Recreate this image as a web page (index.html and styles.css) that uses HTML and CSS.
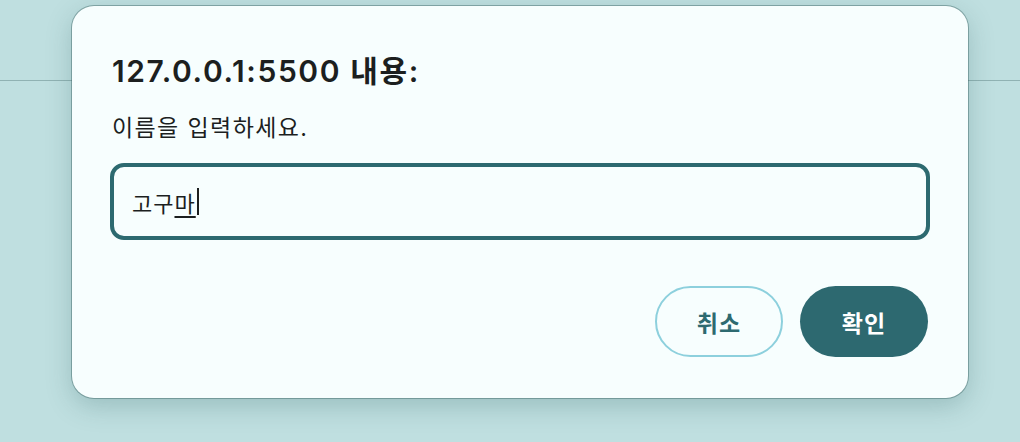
FILE: index.html
```html
<!DOCTYPE html>
<html lang="ko">

<head>
    <meta charset="UTF-8">
    <meta name="viewport" content="width=device-width, initial-scale=1.0">
    <title>Prompt</title>
    <link rel="stylesheet" href="styles.css">
</head>

<body>
    <div class="topbar"></div>

    <div class="dialog">
        <h2 class="dialog-title">127.0.0.1:5500 내용:</h2>
        <p class="dialog-message">이름을 입력하세요.</p>
        <div class="dialog-input">
            <span class="typed">고구</span><span class="composing">마</span><span class="caret"></span>
        </div>
        <div class="dialog-buttons">
            <button class="btn btn-cancel">취소</button>
            <button class="btn btn-ok">확인</button>
        </div>
    </div>
</body>

</html>
```

FILE: styles.css
```css
* {
    margin: 0;
    padding: 0;
    box-sizing: border-box;
    font-family: Inter, "Noto Sans CJK KR", sans-serif;
}

body {
    width: 1020px;
    height: 442px;
    overflow: hidden;
    background-color: #bfdfe0;
    position: relative;
}

.topbar {
    height: 81px;
    border-bottom: 1px solid #90b2b3;
}

.dialog {
    position: absolute;
    top: 6px;
    left: 72px;
    width: 896px;
    height: 392px;
    background-color: #f7fefe;
    border-radius: 22px;
    padding: 47px 40px 0 40px;
    box-shadow: 0 0 0 1px rgba(60, 100, 100, 0.45), 0 8px 26px rgba(40, 90, 90, 0.25);
}

.dialog-title {
    font-size: 30px;
    font-weight: 600;
    line-height: 36px;
    letter-spacing: 1.6px;
    color: #1c1f1f;
}

.dialog-message {
    margin-top: 24px;
    font-size: 23px;
    line-height: 30px;
    letter-spacing: 1.4px;
    color: #1c1f1f;
}

.dialog-input {
    margin-top: 20px;
    margin-left: -2px;
    margin-right: -2px;
    height: 77px;
    border: 4px solid #2d6a70;
    border-radius: 14px;
    padding: 0 18px;
    display: flex;
    align-items: center;
    font-size: 22px;
    letter-spacing: 1px;
    color: #1c1f1f;
}

.composing {
    text-decoration: underline;
    text-underline-offset: 4px;
}

.caret {
    display: inline-block;
    width: 2px;
    height: 27px;
    margin-left: 1px;
    background-color: #1c1f1f;
}

.dialog-buttons {
    display: flex;
    justify-content: flex-end;
    gap: 17px;
    margin-top: 46px;
}

.btn {
    width: 128px;
    height: 71px;
    border-radius: 36px;
    font-size: 23px;
    font-weight: 700;
    letter-spacing: 1px;
    cursor: pointer;
}

.btn-cancel {
    background-color: transparent;
    border: 2px solid #8dd0dd;
    color: #2d6a70;
}

.btn-ok {
    background-color: #2d6970;
    border: none;
    color: #fff;
}
```
